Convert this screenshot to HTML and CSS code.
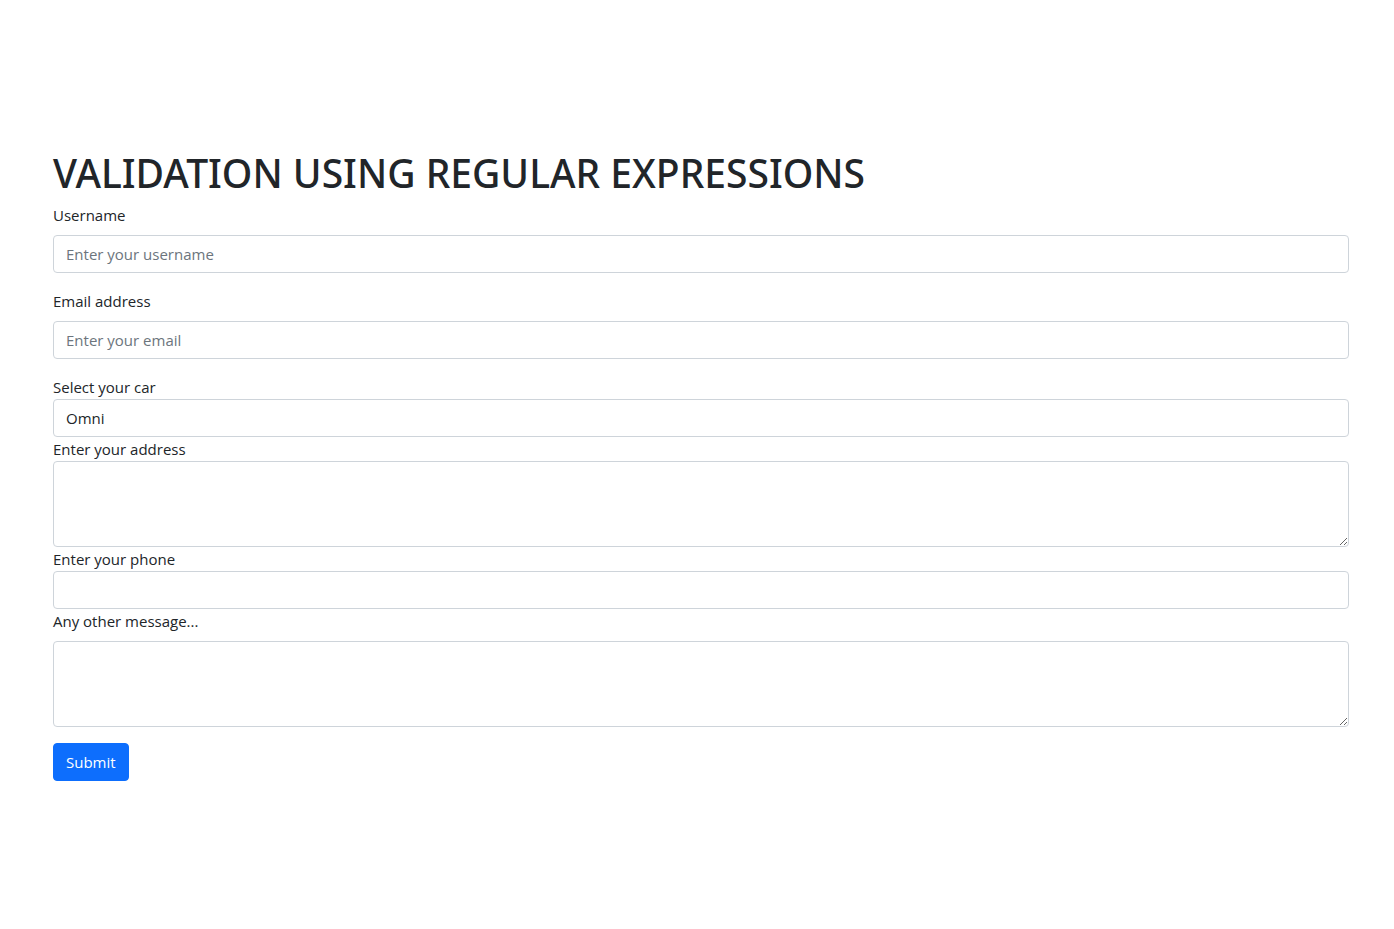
FILE: index.html
```html
<!DOCTYPE html>
<html lang="en">
<head>
<meta charset="utf-8">
<meta name="viewport" content="width=device-width, initial-scale=1">
<title>Validation using regular expressions</title>
<link rel="stylesheet" href="styles.css">
</head>
<body>
<main class="page">
  <h1 class="title">VALIDATION USING REGULAR EXPRESSIONS</h1>
  <form class="form">
    <div class="group spaced">
      <label class="label" for="username">Username</label>
      <input class="control" type="text" id="username" placeholder="Enter your username">
    </div>
    <div class="group spaced">
      <label class="label" for="email">Email address</label>
      <input class="control" type="email" id="email" placeholder="Enter your email">
    </div>
    <div class="group">
      <label for="car">Select your car</label>
      <select class="control" id="car">
        <option>Omni</option>
      </select>
    </div>
    <div class="group">
      <label for="address">Enter your address</label>
      <textarea class="control" id="address" rows="3"></textarea>
    </div>
    <div class="group">
      <label for="phone">Enter your phone</label>
      <input class="control" type="tel" id="phone">
    </div>
    <div class="group spaced">
      <label class="label" for="message">Any other message...</label>
      <textarea class="control" id="message" rows="3"></textarea>
    </div>
    <button class="button" type="submit">Submit</button>
  </form>
</main>
</body>
</html>
```
FILE: styles.css
```css
*,
*::before,
*::after {
  box-sizing: border-box;
}

body {
  margin: 0;
  background: #fff;
  color: #212529;
  font-family: "Segoe UI", "Open Sans", "Noto Sans", sans-serif;
  font-size: 15px;
  line-height: 24px;
}

.page {
  padding: 149px 45px 48px 53px;
}

.title {
  margin: 0 0 6px;
  font-family: "Segoe UI", "Noto Sans", sans-serif;
  font-size: 39px;
  font-weight: 500;
  line-height: 48px;
}

.group {
  display: flex;
  flex-direction: column;
}

.spaced {
  margin-bottom: 16px;
}

.label {
  margin-bottom: 8px;
}

.control {
  display: block;
  width: 100%;
  margin: 0;
  padding: 6px 12px;
  border: 1px solid #ced4da;
  border-radius: 4px;
  background: #fff;
  color: #212529;
  font: inherit;
  appearance: none;
}

textarea.control {
  height: 86px;
  resize: vertical;
}

.control::placeholder {
  color: #6c757d;
  opacity: 1;
}

.button {
  padding: 6px 12px;
  border: 1px solid #0d6efd;
  border-radius: 4px;
  background: #0d6efd;
  color: #fff;
  font: inherit;
  cursor: pointer;
}
```
